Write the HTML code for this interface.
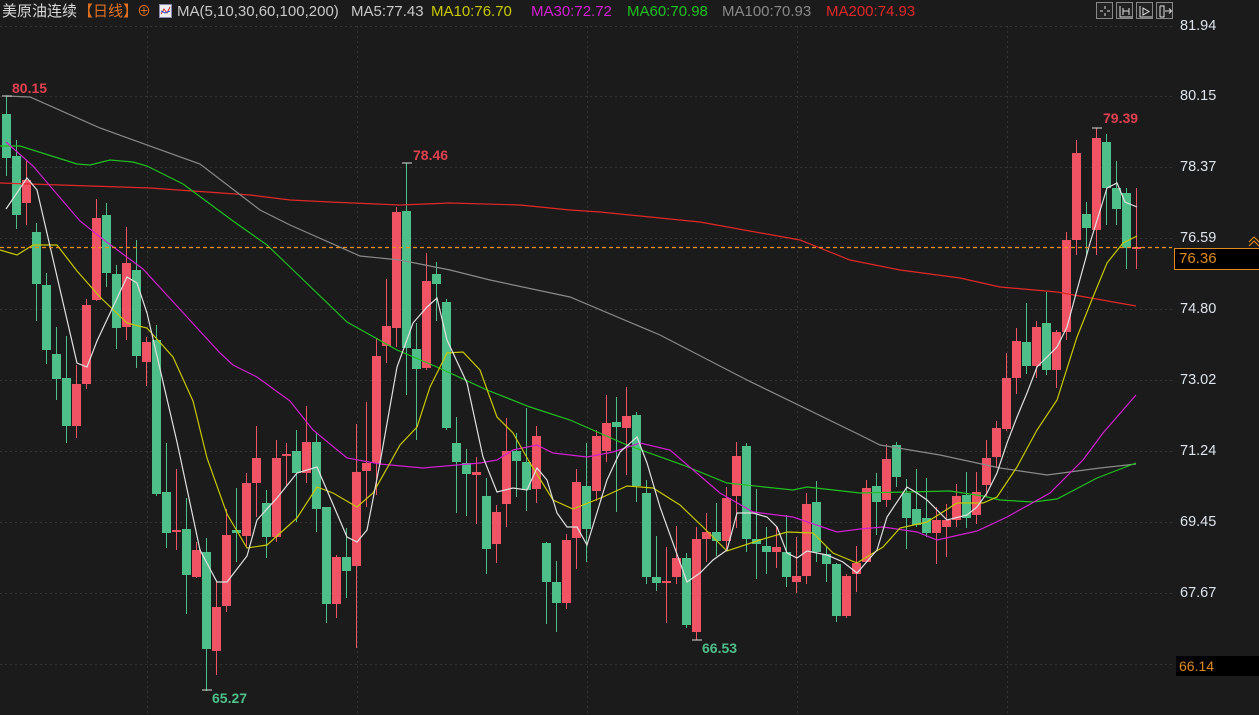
<!DOCTYPE html>
<html><head><meta charset="utf-8">
<style>
html,body{margin:0;padding:0;background:#1b1b1b;width:1259px;height:715px;overflow:hidden}
body{font-family:"Liberation Sans","Noto Sans CJK SC",sans-serif;position:relative}
.hd{position:absolute;top:2px;font-size:15px;white-space:nowrap;line-height:19px}
.ax{position:absolute;left:1180px;font-size:14.5px;color:#dde4ec;line-height:16px}
.tb{position:absolute;top:2px;width:15px;height:15px;border:1px solid #888;background:#222}
</style></head><body>
<svg id="s" width="1259" height="715" style="position:absolute;left:0;top:0">
<g stroke="#343434" stroke-dasharray="2,3" stroke-width="1">
<line x1="0" y1="26.5" x2="1172" y2="26.5"/><line x1="0" y1="96.5" x2="1172" y2="96.5"/>
<line x1="0" y1="167.5" x2="1172" y2="167.5"/><line x1="0" y1="238.5" x2="1172" y2="238.5"/>
<line x1="0" y1="309.5" x2="1172" y2="309.5"/><line x1="0" y1="380.5" x2="1172" y2="380.5"/>
<line x1="0" y1="451.5" x2="1172" y2="451.5"/><line x1="0" y1="522.5" x2="1172" y2="522.5"/>
<line x1="0" y1="593.5" x2="1172" y2="593.5"/><line x1="0" y1="664.5" x2="1172" y2="664.5"/>
<line x1="147.5" y1="26" x2="147.5" y2="715"/><line x1="357.5" y1="26" x2="357.5" y2="715"/>
<line x1="587.5" y1="26" x2="587.5" y2="715"/><line x1="797.5" y1="26" x2="797.5" y2="715"/>
<line x1="1007.5" y1="26" x2="1007.5" y2="715"/>
</g>
<g id="cd"></g>
<g id="ma" fill="none" stroke-width="1.2"></g>
<line x1="0" y1="247.5" x2="1172" y2="247.5" stroke="#f09020" stroke-width="1.2" stroke-dasharray="4,3"/>
<g stroke="#ddd" stroke-width="1">
<line x1="2" y1="96" x2="12" y2="96"/><line x1="1092" y1="128" x2="1102" y2="128"/>
<line x1="202" y1="690" x2="212" y2="690"/><line x1="692" y1="640" x2="702" y2="640"/>
<line x1="402" y1="163" x2="412" y2="163"/>
</g>
<path d="M1249 246 l5 -5 l5 5 M1249 242 l5 -5 l5 5" stroke="#f09020" fill="none"/>
</svg>

<div class="hd" style="left:2px;color:#d8d8d8">美原油连续</div>
<div class="hd" style="left:78px;color:#e07020">【日线】</div>
<div class="hd" style="left:137px;color:#e07020;font-size:14px">⊕</div>
<svg style="position:absolute;left:159px;top:4px" width="14" height="15"><rect x="0.5" y="0.5" width="12" height="13" fill="#eee" stroke="#88a"/><path d="M2 10 L5 5 L8 9 L11 3" stroke="#d03030" fill="none"/><path d="M2 7 L6 9 L11 7" stroke="#3050d0" fill="none"/></svg>
<div class="hd" style="left:177px;color:#c8c8c8">MA(5,10,30,60,100,200)</div>
<div class="hd" style="left:351px;color:#c8c8c8">MA5:77.43</div>
<div class="hd" style="left:431px;color:#c8c800">MA10:76.70</div>
<div class="hd" style="left:531px;color:#d020d0">MA30:72.72</div>
<div class="hd" style="left:627px;color:#20c020">MA60:70.98</div>
<div class="hd" style="left:722px;color:#888">MA100:70.93</div>
<div class="hd" style="left:826px;color:#e02828">MA200:74.93</div>

<div class="tb" style="left:1096px"></div><div class="tb" style="left:1116px"></div>
<div class="tb" style="left:1136px"></div><div class="tb" style="left:1156px"></div>
<svg style="position:absolute;left:1096px;top:2px" width="80" height="17" fill="none" stroke="#ddd">
<path d="M9 4v3M9 11v3M4 9h3M11 9h3"/>
<path d="M24 4v11h12M27 6v7M33 6v7M27 9h6"/>
<path d="M44 4v11h12M47 6l6 3.5-6 3.5z"/>
<path d="M64 4v11M64 4h4v11h-4M69 9h6M73 6.5l2.5 2.5-2.5 2.5"/>
</svg>

<div style="position:absolute;left:12px;top:80px;color:#e04050;font-size:14px;font-weight:bold">80.15</div>
<div style="position:absolute;left:413px;top:147px;color:#e04050;font-size:14px;font-weight:bold">78.46</div>
<div style="position:absolute;left:1103px;top:110px;color:#e04050;font-size:14px;font-weight:bold">79.39</div>
<div style="position:absolute;left:212px;top:690px;color:#4fbf8a;font-size:14px;font-weight:bold">65.27</div>
<div style="position:absolute;left:702px;top:640px;color:#4fbf8a;font-size:14px;font-weight:bold">66.53</div>

<div class="ax" style="top:18px">81.94</div>
<div class="ax" style="top:88px">80.15</div>
<div class="ax" style="top:159px">78.37</div>
<div class="ax" style="top:230px">76.59</div>
<div class="ax" style="top:301px">74.80</div>
<div class="ax" style="top:372px">73.02</div>
<div class="ax" style="top:443px">71.24</div>
<div class="ax" style="top:514px">69.45</div>
<div class="ax" style="top:585px">67.67</div>
<div style="position:absolute;left:1174px;top:248px;width:82px;height:20px;border:1px solid #e08a20;background:#000;color:#e08a20;font-size:15px;line-height:20px;padding-left:4px;box-sizing:content-box">76.36</div>
<div style="position:absolute;left:1176px;top:656px;width:83px;height:20px;background:#000;color:#e08a20;font-size:14px;line-height:20px;padding-left:3px">66.14</div>

<script>
var C=[
['g',114,158,96,176],['g',156,215,140,229],['r',180,203,160,225],['g',232,284,223,321],['g',285,350,273,364],
['g',354,379,327,400],['g',378,426,336,443],['r',384,426,365,438],['r',305,384,299,389],['r',218,300,199,301],
['g',215,273,203,287],['g',274,328,265,349],['r',263,327,227,340],['g',270,356,240,368],['r',342,362,337,386],
['g',340,494,325,496],['g',492,533,443,548],['r',530,532,469,550],['g',529,575,498,614],['r',550,577,542,578],
['g',552,649,538,691],['r',607,651,582,675],['r',535,606,509,612],['g',530,533,488,562],['r',483,536,473,546],
['r',458,483,426,517],['g',503,537,490,558],['r',458,537,440,542],['r',454,456,443,486],['g',451,473,430,522],
['r',442,473,406,483],['g',442,509,433,532],['g',507,604,507,623],['r',557,604,555,618],['g',557,571,528,598],
['r',472,566,424,648],['r',463,471,402,507],['r',356,463,339,495],['r',326,346,279,363],['r',212,328,207,347],
['g',211,348,163,395],['g',349,369,323,440],['r',281,368,253,370],['g',274,284,262,321],['g',302,428,299,430],
['g',443,462,417,513],['g',463,474,449,516],['r',472,475,457,524],['g',496,549,478,574],['r',512,544,505,563],
['r',451,504,418,527],['g',451,461,433,497],['g',462,490,408,511],['r',436,489,426,503],['g',543,582,542,624],
['g',582,603,561,632],['r',540,603,534,609],['r',482,538,469,569],['g',486,529,443,562],['r',436,491,430,501],
['r',423,451,395,462],['g',422,427,397,512],['r',416,428,387,475],['g',415,486,412,502],['g',493,577,480,584],
['g',577,583,536,591],['r',581,583,547,623],['r',558,577,526,584],['g',558,625,553,628],['r',539,632,527,640],
['r',532,539,513,562],['g',532,541,503,556],['r',498,541,487,549],['r',456,496,442,528],['g',446,539,443,552],
['g',539,544,489,579],['g',546,552,527,574],['r',547,552,527,568],['g',552,577,515,587],['r',576,582,537,593],
['r',504,576,493,584],['g',502,552,481,562],['g',554,564,546,582],['g',564,616,563,622],['r',576,616,574,618],
['r',563,574,546,592],['r',488,562,480,562],['g',486,502,473,535],['r',459,500,444,507],['g',445,477,442,487],
['g',493,518,479,549],['g',509,525,469,527],['g',518,533,478,537],['r',520,533,507,564],['r',520,527,504,557],
['r',496,520,484,527],['g',495,518,472,528],['r',492,515,472,524],['r',458,485,440,497],['r',428,457,421,467],
['r',378,429,353,431],['r',341,378,328,394],['g',342,366,303,374],['r',327,366,321,378],['g',323,370,292,375],
['r',332,370,330,388],['r',240,332,232,340],['r',153,240,140,255],['g',214,228,202,255],['r',138,230,128,255],
['g',142,188,134,225],['g',188,209,161,225],['g',193,248,188,269],['r',247,249,188,269]];
var h='';
C.forEach(function(c,i){var x=Math.round(6+10*i)+0.5;var col=c[0]=='r'?'#ef5364':'#4fbf8a';
h+='<line x1="'+x+'" y1="'+c[3]+'" x2="'+x+'" y2="'+c[4]+'" stroke="'+col+'"/>';
var hh=Math.max(c[2]-c[1],1.5);h+='<rect x="'+(x-4.5)+'" y="'+c[1]+'" width="9" height="'+hh+'" fill="'+col+'"/>';});
document.getElementById('cd').innerHTML=h;
var M={
'#e02828':'0,183 60,185 150,188 250,195 290,200 330,202 400,205 450,203 520,205 570,210 600,212 700,222 800,240 850,260 900,270 960,278 1000,287 1057,292 1136,306',
'#8a8a8a':'6,96 30,97 100,128 200,164 260,210 290,225 360,256 400,260 450,270 490,280 570,297 660,335 747,380 860,435 880,445 940,455 1000,468 1047,475 1100,468 1136,464',
'#20c020':'0,146 20,146 77,164 90,165 110,160 133,162 147,166 183,184 233,221 267,245 290,267 347,322 397,350 437,367 487,390 530,407 570,420 627,445 683,465 727,483 793,490 807,487 860,493 950,491 983,496 1000,500 1033,502 1057,499 1097,478 1136,463',
'#d020d0':'6,142 33,166 80,221 100,237 143,269 187,317 220,353 233,365 257,377 290,401 313,430 347,458 380,464 423,468 480,463 497,460 513,450 537,445 553,453 587,457 613,452 640,443 670,450 720,493 753,512 793,517 837,532 860,529 883,527 917,532 937,540 977,531 1007,517 1050,493 1083,460 1103,433 1136,395',
'#c8c800':'0,250 17,255 33,245 57,245 77,271 100,297 127,323 147,328 173,357 193,401 207,458 227,514 247,548 267,545 297,518 317,487 333,493 357,507 373,493 390,463 400,445 417,427 430,387 447,353 463,352 480,370 497,417 513,433 530,463 553,500 573,509 603,497 627,486 653,488 680,505 703,527 727,551 760,540 787,532 813,533 833,553 857,563 883,547 900,528 927,522 957,503 983,503 997,497 1017,467 1037,430 1057,400 1077,337 1093,297 1107,263 1123,243 1137,236',
'#e0e0e0':'6,209 27,178 37,190 77,363 87,367 97,341 127,277 137,283 147,313 177,442 200,550 217,582 227,582 247,556 257,520 277,498 297,473 317,467 347,537 357,542 367,530 380,463 397,367 413,323 427,307 437,298 447,340 467,383 483,457 497,492 513,488 527,490 537,468 547,480 557,513 567,527 577,527 587,545 607,480 620,452 637,437 647,463 660,507 687,582 700,573 713,560 727,550 737,513 753,513 767,517 777,527 787,553 797,558 807,551 827,555 843,562 857,573 877,550 887,517 907,487 917,493 927,500 947,520 967,515 977,507 987,493 997,473 1007,443 1017,417 1027,393 1037,367 1057,347 1067,327 1077,290 1090,243 1107,188 1117,183 1125,202 1137,207'};
var g='';for(var k in M)g+='<polyline points="'+M[k]+'" stroke="'+k+'"/>';
document.getElementById('ma').innerHTML=g;
</script>
</body></html>
